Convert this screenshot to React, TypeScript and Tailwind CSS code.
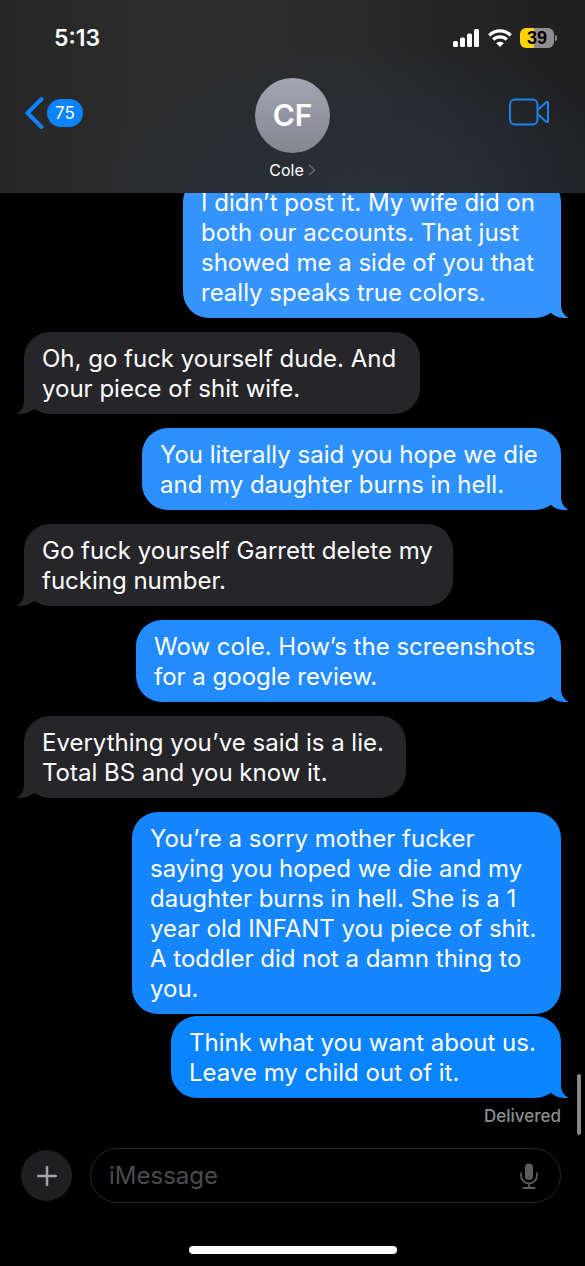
import { useState } from "react";
import clsx from "clsx";

type Message = {
  id: number;
  mine: boolean;
  tail: boolean;
  text: string;
  className: string;
};

const messages: Message[] = [
  {
    id: 1,
    mine: true,
    tail: true,
    text: "I didn’t post it. My wife did on\nboth our accounts. That just\nshowed me a side of you that\nreally speaks true colors.",
    className: "w-[378px] bg-[#3594ff] text-[#3594ff]",
  },
  {
    id: 2,
    mine: false,
    tail: true,
    text: "Oh, go fuck yourself dude. And\nyour piece of shit wife.",
    className: "w-[396px] bg-[#26252a] text-[#26252a]",
  },
  {
    id: 3,
    mine: true,
    tail: true,
    text: "You literally said you hope we die\nand my daughter burns in hell.",
    className: "w-[419px] bg-[#2c90ff] text-[#2c90ff]",
  },
  {
    id: 4,
    mine: false,
    tail: true,
    text: "Go fuck yourself Garrett delete my\nfucking number.",
    className: "w-[429px] bg-[#26252a] text-[#26252a]",
  },
  {
    id: 5,
    mine: true,
    tail: true,
    text: "Wow cole. How’s the screenshots\nfor a google review.",
    className: "w-[425px] bg-[#218bff] text-[#218bff]",
  },
  {
    id: 6,
    mine: false,
    tail: true,
    text: "Everything you’ve said is a lie.\nTotal BS and you know it.",
    className: "w-[382px] bg-[#26252a] text-[#26252a]",
  },
  {
    id: 7,
    mine: true,
    tail: false,
    text: "You’re a sorry mother fucker\nsaying you hoped we die and my\ndaughter burns in hell. She is a 1\nyear old INFANT you piece of shit.\nA toddler did not a damn thing to\nyou.",
    className: "w-[429px] bg-[#1586ff] text-[#1586ff]",
  },
  {
    id: 8,
    mine: true,
    tail: true,
    text: "Think what you want about us.\nLeave my child out of it.",
    className: "w-[390px] bg-[#0b84ff] text-[#0b84ff]",
  },
];

function Bubble({ message }: { message: Message }) {
  const { mine, tail, text, className } = message;
  return (
    <li
      className={clsx(
        "relative shrink-0 rounded-[26px] px-[18px] pt-3 pb-[10px]",
        mine ? "self-end" : "self-start",
        tail ? "mb-[14px] last:mb-0" : "mb-[2px]",
        className
      )}
    >
      <p className="whitespace-pre text-[24px] leading-[30px] text-white">{text}</p>
      {tail && (
        <svg
          viewBox="0 0 25 26"
          className={clsx(
            "absolute bottom-0 h-[26px] w-[25px]",
            mine ? "-right-2" : "-left-2 -scale-x-100"
          )}
          fill="currentColor"
          aria-hidden="true"
        >
          <path d="M17 0V13C17 19 20 23.500 24.600 25.800C21 26.300 12.500 26.500 6.700 20.600V0Z" />
        </svg>
      )}
    </li>
  );
}

function StatusBar() {
  return (
    <div className="flex h-[75px] items-center justify-between pr-[28px] pl-[54px]">
      <time className="text-[23px] leading-[28px] font-semibold">5:13</time>
      <div className="flex items-center gap-2">
        <svg viewBox="0 0 27 18" className="h-[18px] w-[27px]" fill="white" aria-label="Signal">
          <rect x="0" y="12" width="5" height="6" rx="1.5" />
          <rect x="7" y="8.5" width="5" height="9.5" rx="1.5" />
          <rect x="14" y="4.5" width="5" height="13.5" rx="1.5" />
          <rect x="21" y="0" width="5" height="18" rx="1.5" />
        </svg>
        <svg viewBox="0 0 24 18" className="h-[18px] w-[24px]" fill="none" stroke="white" aria-label="Wi-Fi">
          <path d="M1.3 6.4C7.2 0.3 16.8 0.3 22.7 6.4" strokeWidth="3.2" />
          <path d="M5.2 10.6C9 6.9 15 6.9 18.8 10.6" strokeWidth="3.2" />
          <path d="M12 18L8.2 14.2C10.3 12.2 13.7 12.2 15.8 14.2Z" fill="white" stroke="none" />
        </svg>
        <div className="flex items-center gap-px">
          <div className="flex h-[20px] w-[34px] items-center justify-center rounded-[6px] bg-linear-to-r from-[#fdd60a] from-40% to-[#8e8e90] to-40% font-['Liberation_Sans',sans-serif] text-[18px] leading-[20px] font-bold text-black">
            39
          </div>
          <div className="h-[6px] w-[2px] rounded-r-full bg-[#8e8e90]" />
        </div>
      </div>
    </div>
  );
}

function Header() {
  return (
    <header className="h-[193px] shrink-0 bg-[radial-gradient(ellipse_at_65%_100%,#28303a,transparent_55%),linear-gradient(to_right,#272727,#2c2c2d_30%,#2a2a2b_60%,#1e1e1f)]">
      <StatusBar />
      <div className="grid grid-cols-3 items-start px-6">
        <button className="mt-[21px] flex items-center gap-[3px] justify-self-start" aria-label="Back, 75 unread">
          <svg viewBox="0 0 20 34" className="h-[34px] w-[20px]" fill="none" stroke="#0a84ff" strokeWidth="4" strokeLinecap="round" strokeLinejoin="round">
            <path d="M17.5 3L3.5 17L17.5 31" />
          </svg>
          <span className="rounded-full bg-[#0a84ff] px-2 text-[17px] leading-[28px]">75</span>
        </button>
        <button className="mt-[3px] flex flex-col items-center gap-2 justify-self-center">
          <span className="flex size-[75px] items-center justify-center rounded-full bg-linear-to-b from-[#a2a6b3] to-[#848691] text-[30px] font-semibold">
            CF
          </span>
          <span className="flex items-center gap-1 text-[16px] leading-[18px]">
            Cole
            <svg viewBox="0 0 8 12" className="h-[12px] w-[8px]" fill="none" stroke="#68696d" strokeWidth="1.5">
              <path d="M1 1L6.5 6L1 11" />
            </svg>
          </span>
        </button>
        <button className="mt-[23px] mr-3 justify-self-end" aria-label="FaceTime">
          <svg viewBox="0 0 40 28" className="h-[28px] w-[40px]" fill="none" stroke="#1782f0" strokeWidth="2" strokeLinejoin="round">
            <rect x="1" y="1.5" width="27.5" height="25" rx="5" />
            <path d="M28.5 12L37.2 4.2C38 3.5 39 3.8 39 5V23C39 24.2 38 24.5 37.2 23.8L28.5 16" />
          </svg>
        </button>
      </div>
    </header>
  );
}

function Composer() {
  const [draft, setDraft] = useState("");

  return (
    <form className="flex items-center gap-[18px] pr-6 pl-[21px]" onSubmit={e => e.preventDefault()}>
      <button
        type="button"
        className="flex size-[51px] shrink-0 items-center justify-center rounded-full bg-[#1f1f21]"
        aria-label="Add attachment"
      >
        <svg viewBox="0 0 20 20" className="size-5" stroke="#a5a5a7" strokeWidth="2.5" strokeLinecap="round">
          <path d="M10 1.2V18.8M1.2 10H18.8" />
        </svg>
      </button>
      <div className="flex h-[55px] min-w-0 flex-1 items-center rounded-full border border-[#29292b] pr-[22px] pl-[18px]">
        <input
          aria-label="iMessage"
          placeholder="iMessage"
          value={draft}
          onChange={e => setDraft(e.target.value)}
          className="min-w-0 flex-1 bg-transparent text-[24px] leading-[30px] outline-none placeholder:text-[#4b4b4e]"
        />
        <button type="button" aria-label="Dictate">
          <svg viewBox="0 0 18 26" className="h-[26px] w-[18px]" fill="none" stroke="#5c5c5f" strokeWidth="1.8" strokeLinecap="round">
            <rect x="5" y="0.5" width="8" height="16.5" rx="4" fill="#5c5c5f" stroke="none" />
            <path d="M1 10.5V12.5A8 8 0 0 0 17 12.5V10.5M9 20.5V25M3.5 25H14.5" />
          </svg>
        </button>
      </div>
    </form>
  );
}

export default function App() {
  return (
    <div className="relative flex h-screen flex-col bg-black font-['Inter','Liberation_Sans',sans-serif] text-white">
      <Header />
      <main className="flex min-h-0 flex-1 flex-col justify-end overflow-hidden px-6">
        <ul className="flex flex-col">
          {messages.map(m => (
            <Bubble key={m.id} message={m} />
          ))}
        </ul>
        <p className="mt-2 mb-[22px] text-right text-[17px] leading-[20px] font-medium text-[#8d8d92]">Delivered</p>
      </main>
      <Composer />
      <footer className="flex h-[63px] shrink-0 items-end justify-center pb-3">
        <div className="h-2 w-[208px] rounded-full bg-white" />
      </footer>
      {/* scroll indicator */}
      <div className="absolute right-1 bottom-[131px] h-[61px] w-1 rounded-full bg-[#88888a]" />
    </div>
  );
}
